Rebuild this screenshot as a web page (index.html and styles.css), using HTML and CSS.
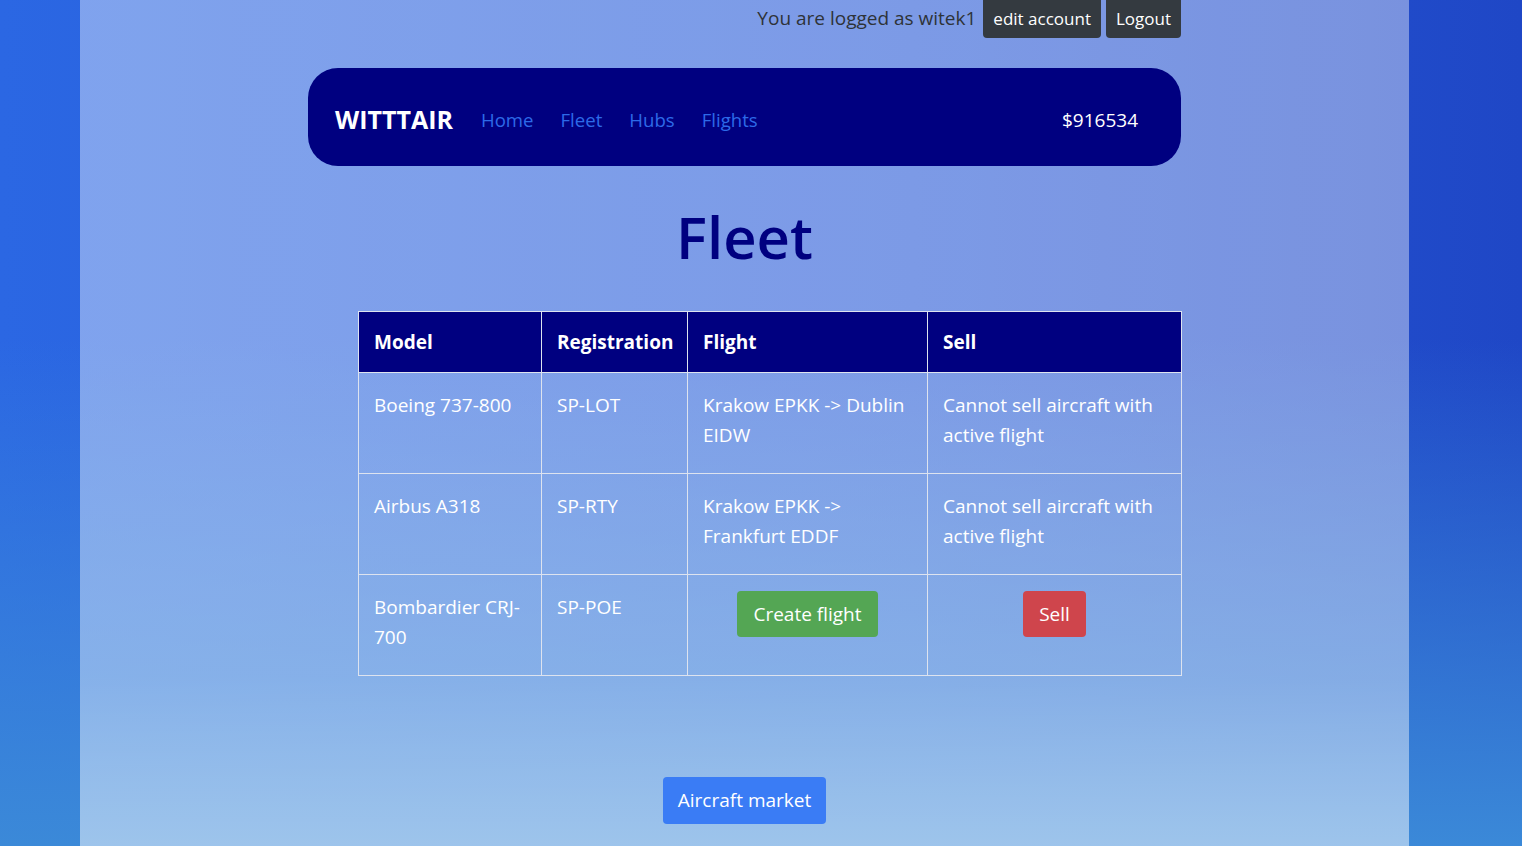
FILE: index.html
```html
<!DOCTYPE html>
<html lang="en">
<head>
<meta charset="utf-8">
<title>WITTTAIR - Fleet</title>
<link rel="stylesheet" href="styles.css">
</head>
<body>
<div class="page">
  <div class="column">
    <div class="userbar">
      <span class="logged">You are logged as witek1</span>
      <a class="btn btn-dark" href="#">edit account</a>
      <a class="btn btn-dark" href="#">Logout</a>
    </div>
    <nav class="navbar">
      <a class="brand" href="#">WITTTAIR</a>
      <ul class="nav-links">
        <li><a href="#">Home</a></li>
        <li><a href="#">Fleet</a></li>
        <li><a href="#">Hubs</a></li>
        <li><a href="#">Flights</a></li>
      </ul>
      <span class="money">$916534</span>
    </nav>
    <h1 class="title">Fleet</h1>
    <table class="fleet">
      <colgroup>
        <col class="c-model"><col class="c-reg"><col class="c-flight"><col class="c-sell">
      </colgroup>
      <thead>
        <tr><th>Model</th><th>Registration</th><th>Flight</th><th>Sell</th></tr>
      </thead>
      <tbody>
        <tr>
          <td>Boeing 737-800</td>
          <td>SP-LOT</td>
          <td>Krakow EPKK -&gt; Dublin EIDW</td>
          <td>Cannot sell aircraft with active flight</td>
        </tr>
        <tr>
          <td>Airbus A318</td>
          <td>SP-RTY</td>
          <td>Krakow EPKK -&gt; Frankfurt EDDF</td>
          <td>Cannot sell aircraft with active flight</td>
        </tr>
        <tr>
          <td>Bombardier CRJ-700</td>
          <td>SP-POE</td>
          <td class="center"><a class="btn btn-green" href="#">Create flight</a></td>
          <td class="center"><a class="btn btn-red" href="#">Sell</a></td>
        </tr>
      </tbody>
    </table>
    <div class="market">
      <a class="btn btn-blue" href="#">Aircraft market</a>
    </div>
  </div>
</div>
</body>
</html>
```
FILE: styles.css
```css
html, body {
  margin: 0;
  padding: 0;
}
body {
  min-height: 100vh;
  font-family: "Open Sans", "Noto Sans", sans-serif;
  font-size: 19px;
  background:
    linear-gradient(to bottom, rgba(59,137,216,0) 0%, rgba(59,137,216,0) 40%, rgba(59,137,216,1) 100%),
    linear-gradient(to right, #2b67e3 0%, #2557d6 60%, #1f47c6 100%);
  background-attachment: fixed;
}
.page {
  margin-left: 80px;
  width: 1329px;
  min-height: 100vh;
  background: linear-gradient(to bottom, rgba(255,255,255,0.4) 0%, rgba(255,255,255,0.4) 80%, rgba(255,255,255,0.5) 100%);
}
.column {
  width: 873px;
  margin: 0 auto;
}
.userbar {
  display: flex;
  justify-content: flex-end;
  align-items: center;
  gap: 5px;
  height: 38px;
}
.logged {
  color: #2e3338;
  font-size: 19px;
  margin-right: 2px;
  margin-top: -3px;
}
.btn {
  display: inline-block;
  text-decoration: none;
  color: #fff;
  border-radius: 4px;
  font-size: 19px;
  line-height: 30px;
}
.btn-dark {
  background: #343a40;
  font-size: 17px;
  padding: 4px 10px;
  border-radius: 0 0 4px 4px;
}
.navbar {
  margin-top: 30px;
  height: 98px;
  background: #000080;
  border-radius: 30px;
  display: flex;
  align-items: center;
  padding: 5px 43px 0 27px;
  box-sizing: border-box;
}
.brand {
  color: #fff;
  font-weight: 700;
  font-size: 25px;
  text-decoration: none;
  margin-top: -2px;
}
.nav-links {
  list-style: none;
  display: flex;
  gap: 27px;
  margin: 0 0 0 28px;
  padding: 0;
  flex: 1;
}
.nav-links a {
  color: #2d6ae8;
  text-decoration: none;
  font-size: 18.6px;
}
.money {
  color: #fff;
  font-size: 19px;
}
.title {
  color: #000080;
  font-size: 58px;
  font-weight: 600;
  line-height: 70px;
  text-align: center;
  margin: 36px 0 39px;
}
.fleet {
  margin-left: 50px;
  width: 823px;
  table-layout: fixed;
  border-collapse: collapse;
  color: #fff;
}
.c-model { width: 183px; }
.c-reg { width: 146px; }
.c-flight { width: 240px; }
.c-sell { width: 254px; }
.fleet th, .fleet td {
  border: 1px solid #dde3ef;
  text-align: left;
  padding: 0 15px;
}
.fleet th {
  background: #000080;
  height: 60px;
  font-weight: 700;
  font-size: 19px;
}
.fleet td {
  vertical-align: top;
  height: 101px;
  box-sizing: border-box;
  padding-top: 17px;
  line-height: 30px;
  font-size: 19px;
}
.fleet td.center {
  text-align: center;
  padding-top: 16px;
}
.btn-green {
  background: #54a654;
  padding: 8px 16px;
}
.btn-red {
  background: #cf454c;
  padding: 8px 16px;
}
.btn-blue {
  background: #3a7cf5;
  padding: 8px 15px;
  line-height: 31px;
}
.market {
  text-align: center;
  margin-top: 101px;
}
```
